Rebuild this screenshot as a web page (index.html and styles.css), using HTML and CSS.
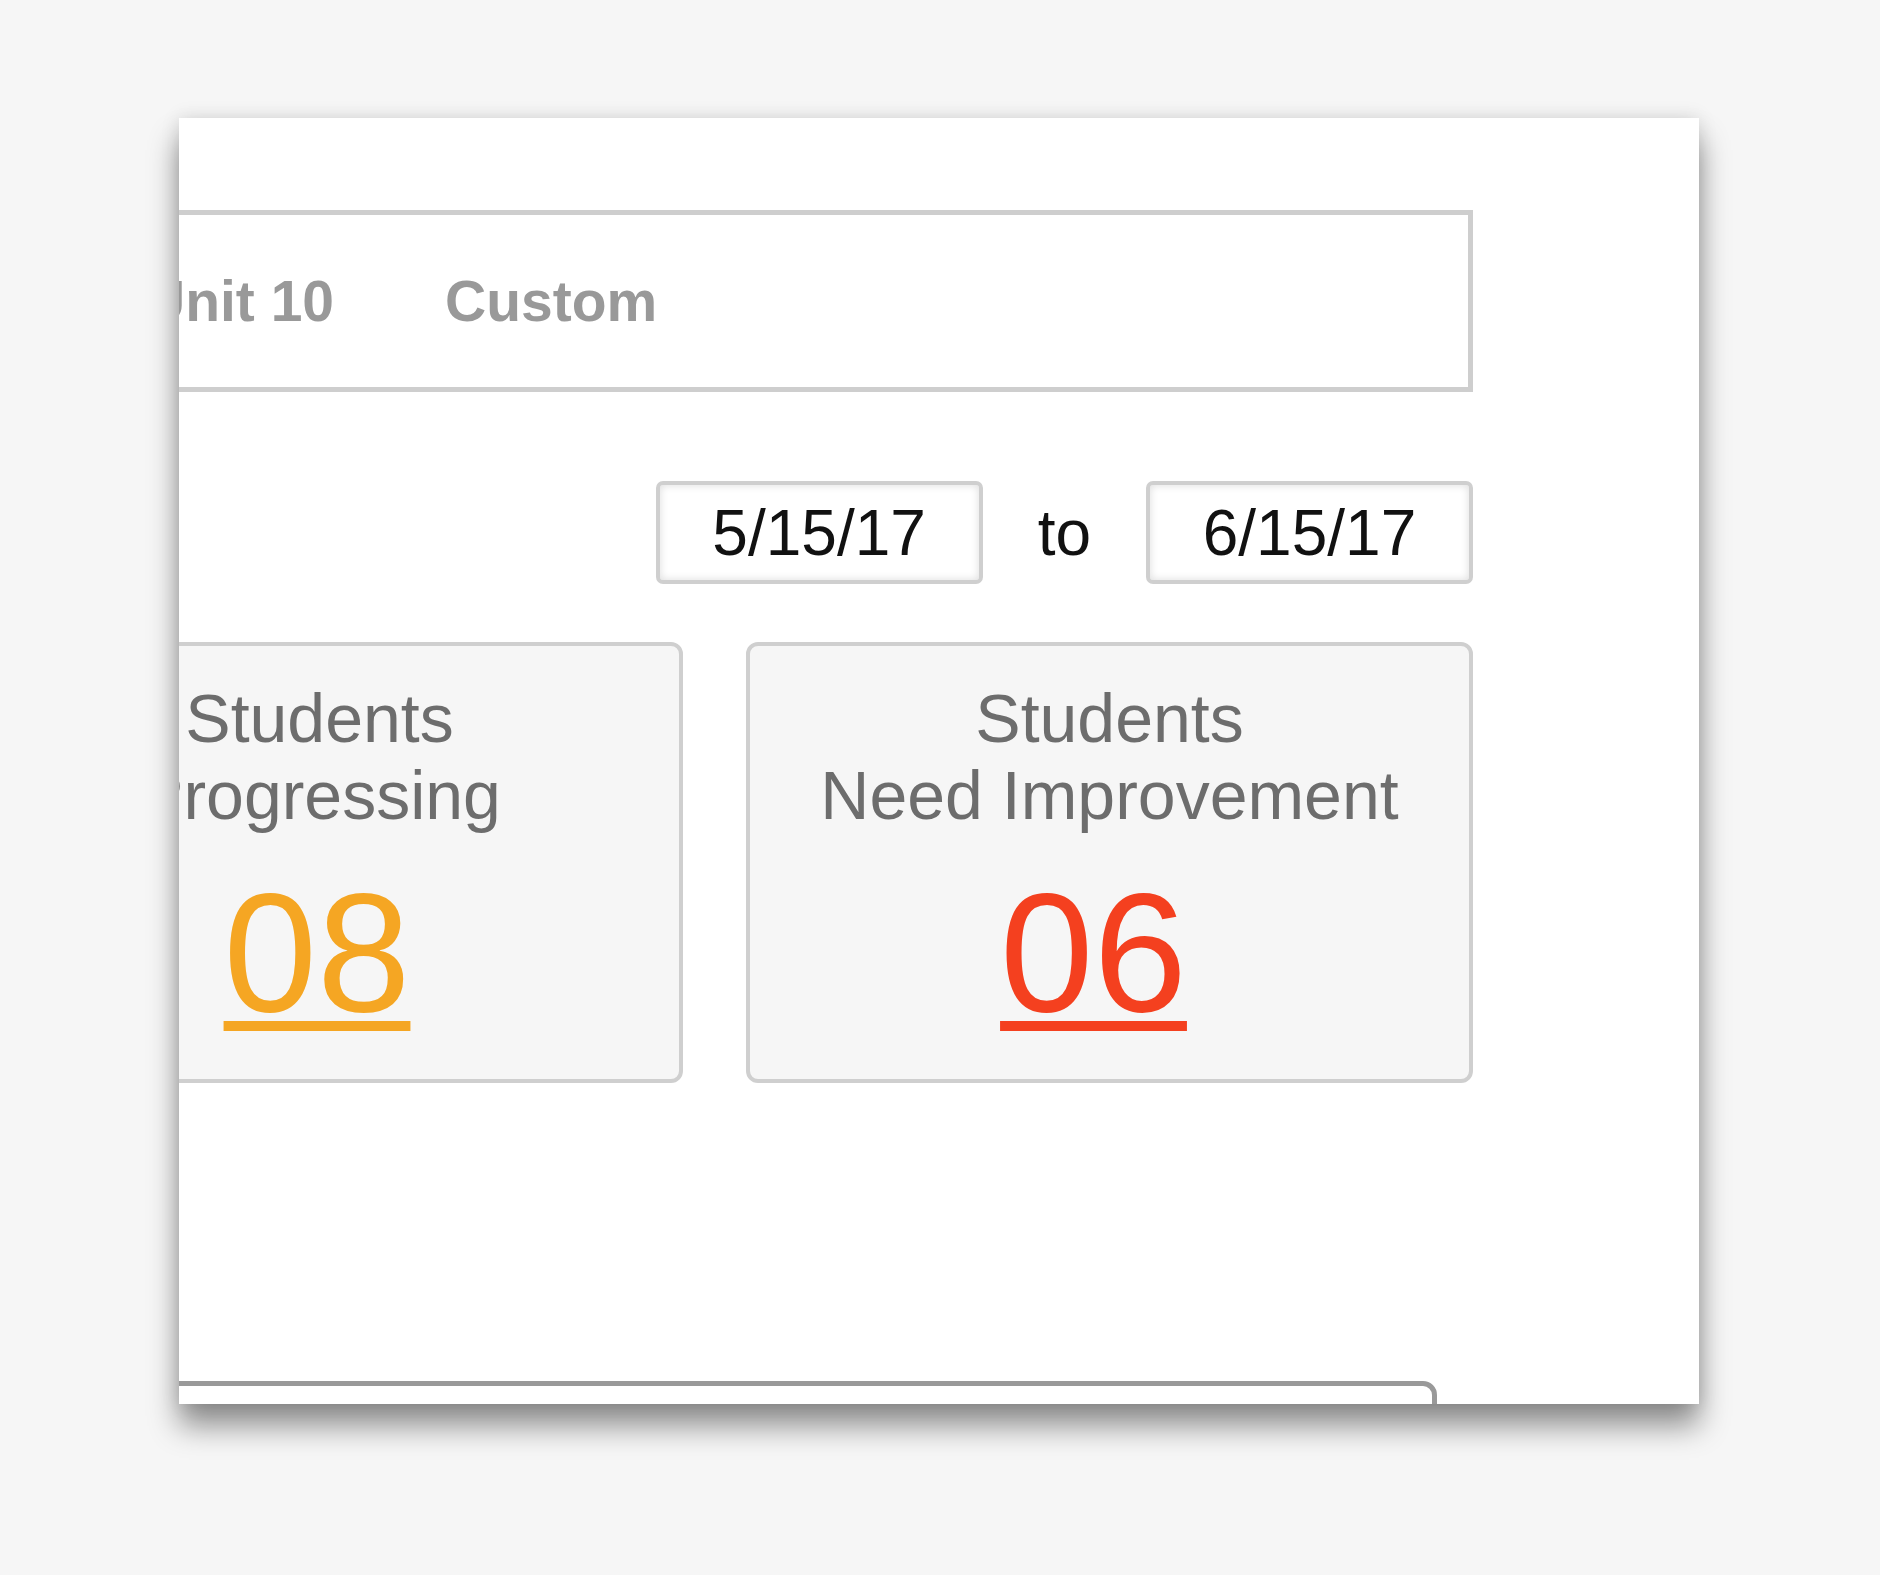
FILE: index.html
```html
<!DOCTYPE html>
<html lang="en">
<head>
<meta charset="utf-8">
<title>Student Progress</title>
<link rel="stylesheet" href="styles.css">
</head>
<body>
<div class="panel">
  <div class="content">
    <div class="tabs">
      <span class="tab">Unit 10</span>
      <span class="tab">Custom</span>
    </div>
    <div class="daterange">
      <div class="date">5/15/17</div>
      <span class="to">to</span>
      <div class="date">6/15/17</div>
    </div>
    <div class="cards">
      <div class="card">
        <div class="card-title">Students<br>Progressing</div>
        <div class="count count-left"><a class="count-link count-orange">08</a></div>
      </div>
      <div class="card">
        <div class="card-title">Students<br>Need Improvement</div>
        <div class="count count-shift"><a class="count-link count-red">06</a></div>
      </div>
    </div>
    <div class="next-section"></div>
  </div>
</div>
</body>
</html>
```
FILE: styles.css
```css
html {
  background: #f6f6f6;
  min-height: 100%;
}

body {
  margin: 0;
  padding-bottom: 120px;
  background: #f6f6f6;
  font-family: "Liberation Sans", Arial, Helvetica, sans-serif;
}

.panel {
  margin: 118px 0 0 179px;
  width: 1520px;
  height: 1286px;
  background: #ffffff;
  overflow: hidden;
  box-shadow: 0 22px 28px rgba(0, 0, 0, 0.42), 0 0 18px rgba(0, 0, 0, 0.12);
}

.content {
  margin-left: -223px;
  width: 1517px;
  padding-top: 92px;
}

.tabs {
  height: 182px;
  box-sizing: border-box;
  border: 5px solid #cecece;
  display: flex;
  align-items: center;
  gap: 111px;
  padding-left: 183px;
  font-size: 57px;
  font-weight: bold;
  line-height: 1;
  color: #999999;
}

.daterange {
  display: flex;
  justify-content: flex-end;
  align-items: center;
  gap: 55px;
  margin-top: 89px;
}

.date {
  width: 327px;
  height: 103px;
  box-sizing: border-box;
  border: 4px solid #cfcfcf;
  border-radius: 7px;
  box-shadow: inset 0 0 8px rgba(0, 0, 0, 0.14);
  display: flex;
  align-items: center;
  justify-content: center;
  font-size: 64px;
  color: #111111;
}

.to {
  font-size: 64px;
  color: #111111;
}

.cards {
  display: grid;
  grid-template-columns: 727px 727px;
  column-gap: 63px;
  margin-top: 58px;
}

.card {
  height: 441px;
  box-sizing: border-box;
  border: 4px solid #cfcfcf;
  border-radius: 12px;
  background: #f6f6f6;
  text-align: center;
  padding-top: 34px;
}

.card-title {
  font-size: 68px;
  line-height: 77px;
  color: #6d6d6d;
}

.count {
  margin-top: 35px;
  font-size: 168px;
  line-height: 168px;
}

.count-left {
  padding-right: 5px;
}

.count-shift {
  padding-right: 32px;
}

.count-link {
  text-decoration: underline;
  text-decoration-thickness: 10px;
  text-underline-offset: 10px;
  cursor: pointer;
}

.count-orange {
  color: #f5a623;
}

.count-red {
  color: #f4401f;
}

.next-section {
  margin-top: 298px;
  margin-right: 36px;
  height: 200px;
  border: 5px solid #999999;
  border-radius: 14px;
}
```
